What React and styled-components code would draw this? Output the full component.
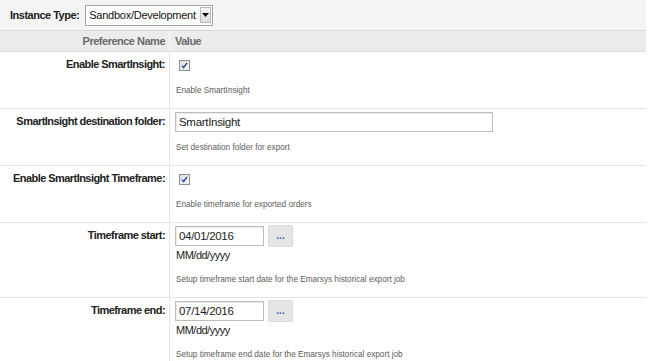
import React from "react";
import styled, { createGlobalStyle } from "styled-components";

const Global = createGlobalStyle`
  html, body { margin: 0; padding: 0; background: #fff; }
  body { font-family: "Liberation Sans", Arial, sans-serif; color: #222; }
`;

const Page = styled.div`
  width: 646px;
`;

const TopBar = styled.div`
  height: 31px;
  background: #f4f4f4;
  border-bottom: 1px solid #dadada;
  display: flex;
  align-items: center;
  padding-left: 10px;
  gap: 6px;
  box-sizing: border-box;
`;

const BoldLabel = styled.span`
  font-weight: bold;
  font-size: 11px;
  letter-spacing: -0.5px;
  color: #222;
`;

const Select = styled.div`
  width: 128px;
  height: 21px;
  box-sizing: border-box;
  border: 1px solid #a5a5a5;
  background: #fff;
  display: flex;
  align-items: center;
  justify-content: space-between;
  padding: 0 1px 0 3px;
  font-size: 11px;
  letter-spacing: -0.25px;
  color: #111;
`;

const SelectArrow = styled.span`
  width: 11px;
  height: 16px;
  box-sizing: border-box;
  border: 1px solid #b9b9b9;
  background: linear-gradient(#f4f4f4, #dedede);
  display: flex;
  align-items: center;
  justify-content: center;
`;

const Grid = styled.div`
  display: grid;
  grid-template-columns: 170px 1fr;
  border-bottom: 1px solid ${(p) => p.$line || "#e4e4e4"};
  background: ${(p) => p.$bg || "transparent"};
`;

const HeadCell = styled.div`
  height: 20px;
  display: flex;
  align-items: center;
  font-weight: bold;
  font-size: 11px;
  letter-spacing: -0.5px;
  color: #6a6a6a;
  justify-content: ${(p) => (p.$right ? "flex-end" : "flex-start")};
  padding: ${(p) => (p.$right ? "0 4px 0 0" : "0 0 0 5px")};
  border-right: ${(p) => (p.$right ? "1px solid #f8f8f8" : "none")};
`;

const LabelCell = styled.div`
  text-align: right;
  padding: 5px 4px 0 0;
  font-weight: bold;
  font-size: 11px;
  line-height: 14px;
  letter-spacing: -0.55px;
  color: #222;
  border-right: 1px solid #e6e6e6;
`;

const ValueCell = styled.div`
  padding: 2px 5px 12px 5px;
  display: flex;
  flex-direction: column;
  align-items: flex-start;
`;

const Control = styled.div`
  height: 22px;
  display: flex;
  align-items: ${(p) => (p.$top ? "flex-start" : "center")};
  gap: 4px;
`;

const Check = styled.span`
  display: inline-block;
  width: 11px;
  height: 11px;
  margin: 3px 0 0 4px;
`;

const TextBox = styled.div`
  width: ${(p) => p.$w}px;
  height: 20px;
  box-sizing: border-box;
  border: 1px solid #bdbdbd;
  box-shadow: inset 1px 1px 0 #e9e9e9;
  background: #fff;
  display: flex;
  align-items: center;
  padding-left: 3px;
  font-size: 11.5px;
  letter-spacing: -0.3px;
  color: #222;
`;

const DotButton = styled.div`
  width: 25px;
  height: 22px;
  box-sizing: border-box;
  background: #e5e5e5;
  border: 1px solid #d9d9d9;
  border-radius: 2px;
  display: flex;
  align-items: center;
  justify-content: center;
  font-size: 10px;
  font-weight: bold;
  color: #3a66b5;
  padding-bottom: 1px;
`;

const Hint = styled.div`
  font-size: 11px;
  line-height: 14px;
  letter-spacing: -0.5px;
  color: #222;
  padding: 1px 0 3px 1px;
`;

const Desc = styled.div`
  margin-top: 10px;
  font-size: 8.2px;
  line-height: 10px;
  color: #5c5c5c;
  padding-left: 1px;
`;

const CheckIcon = () => (
  <Check>
    <svg width="11" height="11" viewBox="0 0 11 11">
      <defs>
        <linearGradient id="cbg" x1="0" y1="0" x2="1" y2="1">
          <stop offset="0" stopColor="#dcdcdc" />
          <stop offset="1" stopColor="#fafafa" />
        </linearGradient>
      </defs>
      <rect x="0.5" y="0.5" width="10" height="10" fill="url(#cbg)" stroke="#8e8f8f" />
      <path d="M3 5.6 L4.6 7.6 L8 2.8" fill="none" stroke="#2a3f9a" strokeWidth="1.4" />
    </svg>
  </Check>
);

const rows = [
  { label: "Enable SmartInsight:", type: "check", desc: "Enable SmartInsight" },
  { label: "SmartInsight destination folder:", type: "text", value: "SmartInsight", desc: "Set destination folder for export" },
  { label: "Enable SmartInsight Timeframe:", type: "check", desc: "Enable timeframe for exported orders" },
  { label: "Timeframe start:", type: "date", value: "04/01/2016", desc: "Setup timeframe start date for the Emarsys historical export job" },
  { label: "Timeframe end:", type: "date", value: "07/14/2016", desc: "Setup timeframe end date for the Emarsys historical export job" },
];

export default function App() {
  return (
    <Page>
      <Global />
      <TopBar>
        <BoldLabel>Instance Type:</BoldLabel>
        <Select>
          <span>Sandbox/Development</span>
          <SelectArrow>
            <svg width="7" height="4" viewBox="0 0 7 4">
              <path d="M0 0 H7 L3.5 4 Z" fill="#111" />
            </svg>
          </SelectArrow>
        </Select>
      </TopBar>
      <Grid $bg="#ececec" $line="#dedede">
        <HeadCell $right>Preference Name</HeadCell>
        <HeadCell>Value</HeadCell>
      </Grid>
      {rows.map((r) => (
        <Grid key={r.label}>
          <LabelCell>{r.label}</LabelCell>
          <ValueCell>
            {r.type === "check" && (
              <Control $top>
                <CheckIcon />
              </Control>
            )}
            {r.type === "text" && (
              <Control>
                <TextBox $w={318}>{r.value}</TextBox>
              </Control>
            )}
            {r.type === "date" && (
              <>
                <Control>
                  <TextBox $w={89}>{r.value}</TextBox>
                  <DotButton>...</DotButton>
                </Control>
                <Hint>MM/dd/yyyy</Hint>
              </>
            )}
            <Desc>{r.desc}</Desc>
          </ValueCell>
        </Grid>
      ))}
    </Page>
  );
}
